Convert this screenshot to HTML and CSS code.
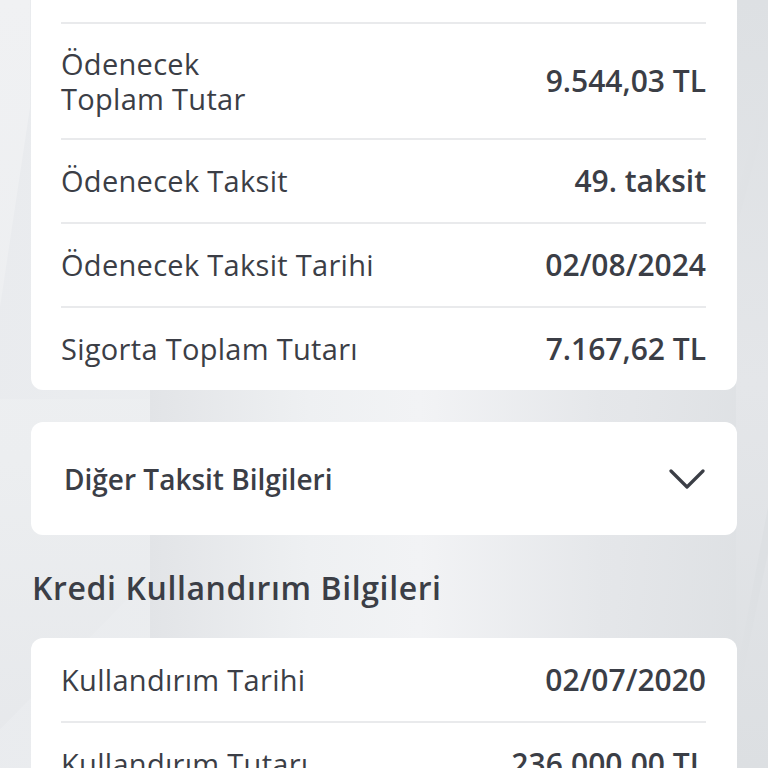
FILE: index.html
```html
<!DOCTYPE html>
<html lang="tr">
<head>
	<meta charset="UTF-8">
	<title>Kredi Detayı</title>
	<link rel="stylesheet" href="styles.css">
</head>
<body>
	<div class="bg-shapes">
		<div class="bg-plane bg-plane--left"></div>
		<div class="bg-plane bg-plane--mid"></div>
		<div class="bg-plane bg-plane--right"></div>
	</div>
	<main class="page">
		<!-- taksit bilgileri (ust kismi ekran disinda) -->
		<section class="card card--cut">
			<div class="row row--top">
				<span class="row-label">Ödenecek<br>Toplam Tutar</span>
				<span class="row-value">9.544,03 TL</span>
			</div>
			<div class="row">
				<span class="row-label">Ödenecek Taksit</span>
				<span class="row-value">49. taksit</span>
			</div>
			<div class="row">
				<span class="row-label">Ödenecek Taksit Tarihi</span>
				<span class="row-value">02/08/2024</span>
			</div>
			<div class="row">
				<span class="row-label">Sigorta Toplam Tutarı</span>
				<span class="row-value">7.167,62 TL</span>
			</div>
		</section>

		<!-- acilir blok -->
		<section class="card accordion">
			<span class="accordion-title">Diğer Taksit Bilgileri</span>
			<svg class="chevron" viewBox="0 0 36 22" width="36" height="22">
				<path d="M2 3 L18 19 L34 3" />
			</svg>
		</section>

		<h2 class="section-title">Kredi Kullandırım Bilgileri</h2>

		<section class="card">
			<div class="row">
				<span class="row-label">Kullandırım Tarihi</span>
				<span class="row-value">02/07/2020</span>
			</div>
			<div class="row">
				<span class="row-label">Kullandırım Tutarı</span>
				<span class="row-value">236.000,00 TL</span>
			</div>
		</section>
	</main>
</body>
</html>
```

FILE: styles.css
```css
* {
	box-sizing: border-box;
}

html,
body {
	height: 100%;
}

body {
	margin: 0;
	overflow: hidden;
	font-family: "Open Sans", Lato, sans-serif;
	color: #3b3e46;
	background: linear-gradient(95deg, #e9ebee 0%, #eceef0 40%, #e4e6e9 80%, #dcdfe2 100%);
	position: relative;
}

/* декоративные плоскости фона */
.bg-shapes {
	position: absolute;
	inset: 0;
	pointer-events: none;
}

.bg-plane {
	position: absolute;
}

.bg-plane--left {
	left: 0;
	top: 0;
	width: 150px;
	height: 768px;
	background: linear-gradient(180deg, #f0f1f3 0%, #eceef0 60%, #e6e8eb 100%);
	clip-path: polygon(0 0, 20% 0, 20% 14%, 0 40%, 0 52%, 100% 52%, 100% 75%, 0 95%);
}

.bg-plane--mid {
	left: 150px;
	top: 390px;
	width: 450px;
	height: 250px;
	background: linear-gradient(90deg, #e2e4e7 0%, #eef0f2 35%, #f2f3f5 60%, #e5e7ea 100%);
}

.bg-plane--right {
	right: 0;
	top: 0;
	width: 80px;
	height: 768px;
	background: linear-gradient(180deg, #dde0e3 0%, #e4e6e9 50%, #dcdfe2 100%);
	clip-path: polygon(60% 0, 100% 0, 100% 100%, 60% 100%, 60% 92%, 100% 72%, 100% 66%, 60% 88%, 60% 30%, 100% 14%, 100% 10%, 60% 26%);
}

.page {
	position: relative;
	padding: 0 31px;
}

.card {
	background: #fff;
	border-radius: 12px;
}

.card--cut {
	margin-top: -20px;
	padding-top: 42px;
}

.row {
	display: flex;
	justify-content: space-between;
	align-items: center;
	margin: 0 31px 0 30px;
	padding: 24px 0;
	border-top: 2px solid #e9eaec;
}

.row--top {
	padding: 22px 0;
}

.row--top .row-label {
	line-height: 35px;
}

.card > .row:first-child:not(.row--top) {
	border-top: none;
	padding-top: 25px;
}

.row-label {
	font-size: 29px;
	line-height: 34px;
	font-weight: 400;
	letter-spacing: .3px;
}

.row-value {
	font-size: 30px;
	line-height: 34px;
	font-weight: 600;
	white-space: nowrap;
}

.accordion {
	display: flex;
	align-items: center;
	justify-content: space-between;
	height: 113px;
	margin-top: 32px;
	padding: 0 32px 0 33px;
}

.accordion-title {
	font-size: 28px;
	font-weight: 600;
}

.chevron {
	fill: none;
	stroke: #3b3e46;
	stroke-width: 3.2;
	stroke-linecap: round;
	stroke-linejoin: round;
}

.section-title {
	margin: 0;
	padding: 37px 1px 34px;
	font-size: 32px;
	line-height: 32px;
	font-weight: 600;
	letter-spacing: .6px;
}
```
